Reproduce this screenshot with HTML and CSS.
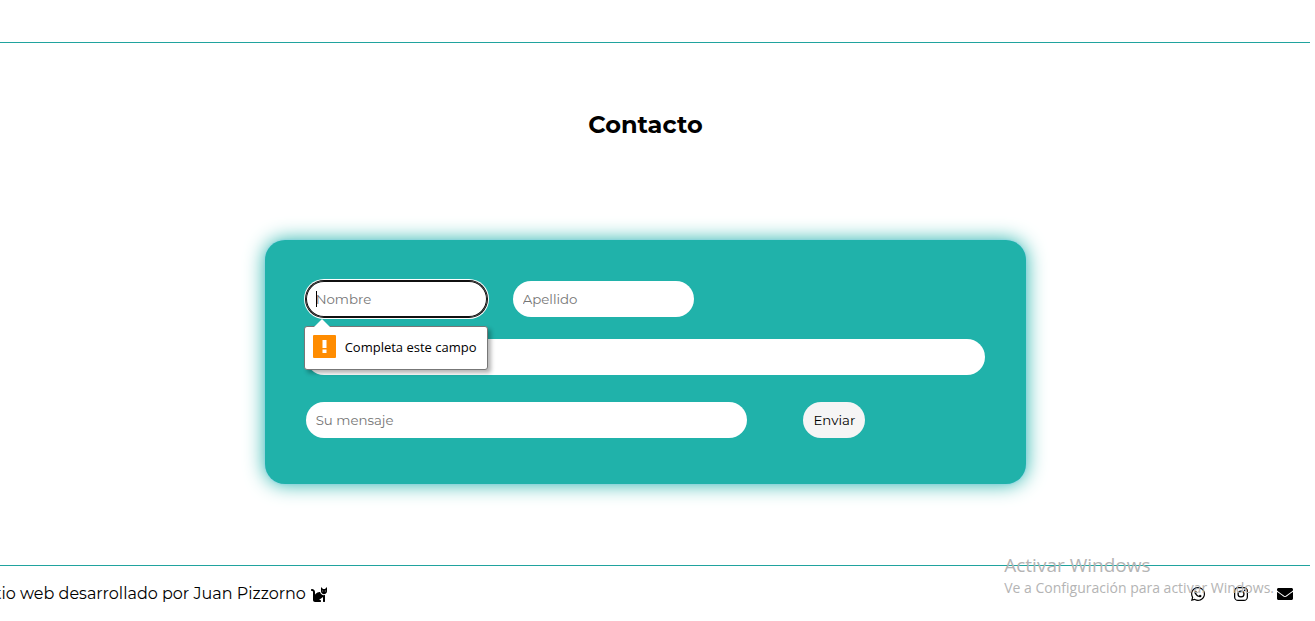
FILE: index.html
```html
<!DOCTYPE html>
<html lang="es">
<head>
<meta charset="utf-8">
<meta name="viewport" content="width=device-width, initial-scale=1">
<title>Contacto</title>
<link rel="stylesheet" href="styles.css">
</head>
<body>
<main class="contact">
  <h2 class="title">Contacto</h2>
  <form class="card">
    <div class="row row-names">
      <div class="field">
        <input class="input input-focus" type="text" placeholder="Nombre" aria-label="Nombre" required>
        <span class="caret"></span>
        <div class="tip" role="alert">
          <svg class="tip-icon" viewBox="0 0 23 23" aria-hidden="true"><rect width="23" height="23" rx="1" fill="#ff8c00"/><path d="M9.500 5h4v8h-4zM9.500 14.500h4v3.500h-4z" fill="#fff"/></svg>
          <span>Completa este campo</span>
        </div>
      </div>
      <input class="input" type="text" placeholder="Apellido" aria-label="Apellido">
    </div>
    <input class="input input-wide" type="email" aria-label="Email">
    <div class="row row-message">
      <input class="input input-message" type="text" placeholder="Su mensaje" aria-label="Su mensaje">
      <button class="send" type="submit">Enviar</button>
    </div>
  </form>
</main>
<footer class="footer">
  <p class="credit">Sitio web desarrollado por Juan Pizzorno
    <svg class="cat" viewBox="0 0 512 512" aria-hidden="true"><path d="M290.590 192c-20.180 0-106.820 1.980-162.590 85.950V192c0-52.940-43.060-96-96-96-17.670 0-32 14.330-32 32s14.330 32 32 32c17.640 0 32 14.360 32 32v256c0 35.300 28.700 64 64 64h176c8.840 0 16-7.160 16-16v-16c0-17.670-14.330-32-32-32h-32l128-96v144c0 8.840 7.160 16 16 16h32c8.840 0 16-7.160 16-16V289.860c-10.290 2.670-20.890 4.540-32 4.540-61.810 0-113.520-44.050-125.410-102.400zM448 96h-64l-64-64v134.400c0 53.020 42.980 96 96 96s96-42.980 96-96V32l-64 64zm-72 80c-8.840 0-16-7.160-16-16s7.160-16 16-16 16 7.160 16 16-7.160 16-16 16zm80 0c-8.840 0-16-7.160-16-16s7.160-16 16-16 16 7.160 16 16-7.160 16-16 16z"/></svg>
  </p>
  <nav class="social">
    <a href="#" aria-label="WhatsApp"><svg width="14" height="16" viewBox="0 0 448 512"><path d="M380.900 97.100C339 55.100 283.200 32 223.900 32c-122.400 0-222 99.600-222 222 0 39.100 10.200 77.300 29.600 111L0 480l117.700-30.900c32.400 17.700 68.900 27 106.100 27h.1c122.300 0 224.100-99.600 224.100-222 0-59.300-25.200-115-67.100-157zm-157 341.600c-33.200 0-65.700-8.900-94-25.700l-6.700-4-69.800 18.300L72 359.200l-4.400-7c-18.500-29.400-28.200-63.300-28.200-98.200 0-101.700 82.800-184.500 184.600-184.500 49.300 0 95.600 19.200 130.400 54.100 34.800 34.900 56.200 81.200 56.100 130.500 0 101.800-84.900 184.600-186.600 184.600zm101.200-138.200c-5.500-2.800-32.800-16.200-37.900-18-5.100-1.900-8.800-2.800-12.500 2.800-3.700 5.600-14.300 18-17.600 21.800-3.200 3.700-6.500 4.200-12 1.400-32.600-16.300-54-29.100-75.500-66-5.700-9.800 5.700-9.100 16.300-30.300 1.800-3.700.9-6.900-.5-9.700-1.400-2.800-12.500-30.100-17.100-41.200-4.500-10.800-9.100-9.300-12.500-9.500-3.200-.2-6.900-.2-10.600-.2-3.700 0-9.700 1.400-14.800 6.900-5.100 5.600-19.400 19-19.400 46.300 0 27.300 19.900 53.700 22.600 57.400 2.800 3.700 39.100 59.700 94.800 83.800 35.200 15.200 49 16.500 66.600 13.900 10.700-1.600 32.800-13.400 37.400-26.400 4.600-13 4.600-24.100 3.200-26.400-1.300-2.500-5-3.900-10.500-6.600z"/></svg></a>
    <a href="#" aria-label="Instagram"><svg width="14" height="16" viewBox="0 0 448 512"><rect x="20" y="52" width="408" height="408" rx="112" fill="none" stroke="#000" stroke-width="40"/><circle cx="224" cy="256" r="95" fill="none" stroke="#000" stroke-width="40"/><circle cx="343" cy="137" r="27"/></svg></a>
    <a href="#" aria-label="Correo"><svg width="16" height="16" viewBox="0 0 512 512"><path d="M502.300 190.800c3.900-3.100 9.700-.2 9.700 4.700V400c0 26.500-21.500 48-48 48H48c-26.500 0-48-21.500-48-48V195.600c0-5 5.700-7.800 9.700-4.700 22.400 17.400 52.100 39.500 154.100 113.600 21.100 15.400 56.700 47.800 92.200 47.600 35.700.3 72-32.800 92.300-47.600 102-74.100 131.600-96.300 154-113.700zM256 320c23.200.4 56.600-29.200 73.400-41.400 132.700-96.300 142.800-104.700 173.400-128.700 5.800-4.500 9.200-11.500 9.200-18.900v-19c0-26.500-21.500-48-48-48H48c-26.500 0-48 21.500-48 48v19c0 7.400 3.400 14.300 9.200 18.900 30.600 23.900 40.700 32.400 173.400 128.700 16.800 12.200 50.200 41.800 73.400 41.400z"/></svg></a>
  </nav>
</footer>
<aside class="activation">
  <p class="activation-title">Activar Windows</p>
  <p class="activation-text">Ve a Configuración para activar Windows.</p>
</aside>
</body>
</html>
```
FILE: styles.css
```css
* { box-sizing: border-box; }
body {
  margin: 42px 5px 0 0;
  background: #fff;
  color: #000;
  font-family: Montserrat, Inter, sans-serif;
  overflow: hidden;
}
p, h2 { margin: 0; }
.contact {
  border-top: 1px solid #20a39e;
  padding: 66px 19px 81px 0;
}
.title {
  font-size: 24px;
  line-height: 32px;
  text-align: center;
}
.card {
  display: flex;
  flex-direction: column;
  width: 59%;
  margin: 99px auto 0;
  padding: 41px 41px 46px;
  background: #20b2aa;
  border-radius: 20px;
  box-shadow: 0 0 2px #87ceeb, 0 0 20px #20b2aa;
}
.row { display: flex; }
.row-names { gap: 26px; margin-bottom: 22px; }
.row-message { gap: 56px; margin-top: 27px; }
.field { position: relative; }
.input, .send {
  height: 36px;
  padding: 0 10px;
  border: 0;
  border-radius: 18px;
  font-family: inherit;
}
.input { width: 181px; background: #fff; outline: 0; }
.input::placeholder { color: #757575; }
.input-focus {
  display: block;
  box-shadow: inset 0 0 0 1px #101010, 0 0 0 1px #101010, 0 0 0 2px #fff;
}
.input-wide { width: 100%; }
.input-message { width: 65%; }
.send { background: #f5f5f5; color: #000; }
.caret {
  position: absolute;
  left: 10px;
  top: 10px;
  width: 1px;
  height: 16px;
  background: #000;
}
.tip {
  position: absolute;
  z-index: 2;
  top: 45px;
  left: -2px;
  display: flex;
  align-items: center;
  gap: 9px;
  height: 44px;
  padding: 0 10px 3px 8px;
  background: #fff;
  border: 1px solid #777;
  border-radius: 3px;
  box-shadow: 3px 3px 4px rgba(0, 0, 0, .3);
  font-family: "Segoe UI", "Open Sans", sans-serif;
  font-size: 13px;
  white-space: nowrap;
}
.tip::before {
  content: "";
  position: absolute;
  top: -8px;
  left: 9px;
  border: 8px solid transparent;
  border-top: 0;
  border-bottom-color: #fff;
}
.tip-icon { width: 23px; height: 23px; }
.footer {
  display: flex;
  justify-content: space-between;
  align-items: center;
  border-top: 1px solid #20a39e;
  padding: 16px 17px 16px 0;
}
.credit {
  display: flex;
  align-items: center;
  gap: 5px;
  margin-left: -19px;
  font-size: 16px;
  line-height: 24px;
  white-space: nowrap;
}
.cat { width: 16px; height: 16px; }
.social { display: flex; gap: 29px; }
.social a { display: flex; color: #000; }
.activation {
  position: absolute;
  right: 41px;
  top: 552px;
  color: #b4b4b4;
  font-family: "Segoe UI", "Open Sans", sans-serif;
  pointer-events: none;
}
.activation-title { font-size: 19px; line-height: 26px; }
.activation-text { font-size: 14px; line-height: 20px; }
```
